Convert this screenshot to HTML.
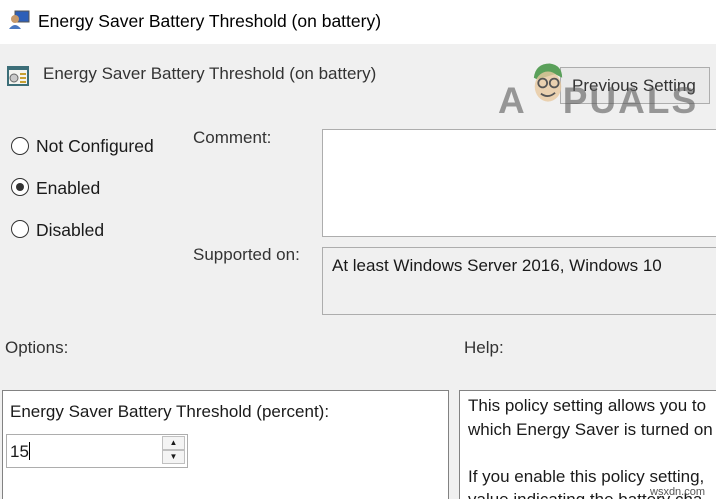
<!DOCTYPE html>
<html style="overflow:hidden;width:716px;height:499px"><head><style>
*{margin:0;padding:0;box-sizing:border-box}
body{width:716px;height:499px;overflow:hidden;background:#f0f0f0;font-family:"Liberation Sans",sans-serif;color:#1a1a1a;position:relative}
.a{position:absolute;white-space:nowrap}
.t{font-size:17px}
.r{position:absolute;width:18px;height:18px;border:1.5px solid #333;border-radius:50%;background:#fff}
</style></head><body>
<div class="a" style="left:0;top:0;width:716px;height:44px;background:#fff"></div>
<svg class="a" style="left:8px;top:9px" width="22" height="22" viewBox="0 0 22 22"><rect x="7" y="2" width="14" height="11" fill="#2d5fb8" stroke="#555"/><circle cx="7" cy="10" r="4" fill="#c89a6a"/><path d="M1 20 Q7 12 13 20Z" fill="#4a78c0"/></svg>
<div class="a" style="left:38px;top:11px;font-size:17.5px;color:#000">Energy Saver Battery Threshold (on battery)</div>
<svg class="a" style="left:6px;top:64px" width="24" height="24" viewBox="0 0 24 24"><rect x="1" y="2" width="22" height="20" fill="#3c6e78"/><rect x="3" y="6" width="18" height="14" fill="#f4f4f0"/><circle cx="8" cy="14" r="4" fill="#c9c9c9" stroke="#666"/><rect x="14" y="9" width="6" height="2" fill="#c8a030"/><rect x="14" y="13" width="6" height="2" fill="#c8a030"/><rect x="14" y="17" width="6" height="2" fill="#c8a030"/></svg>
<div class="a t" style="left:43px;top:64px;color:#333">Energy Saver Battery Threshold (on battery)</div>
<div class="a" style="left:560px;top:67px;width:150px;height:37px;border:1px solid #adadad;background:#e9e9e9"></div>
<div class="a t" style="left:572px;top:76px;color:#333">Previous Setting</div>
<div class="a" style="left:498px;top:80px;font-size:37px;font-weight:bold;color:rgba(90,90,90,.6);letter-spacing:2px">A<span style="display:inline-block;width:36px"></span>PUALS</div>
<svg class="a" style="left:528px;top:60px" width="40" height="46" viewBox="0 0 44 52"><path d="M6 20 Q8 4 24 4 Q38 6 38 20 L30 16 L10 22Z" fill="#5aa05a"/><ellipse cx="22" cy="30" rx="15" ry="17" fill="#e8c9a0" opacity=".8"/><circle cx="16" cy="26" r="5" fill="none" stroke="#555" stroke-width="2"/><circle cx="29" cy="26" r="5" fill="none" stroke="#555" stroke-width="2"/><path d="M14 38 Q22 44 30 37" stroke="#555" stroke-width="2" fill="none"/></svg>
<div class="r" style="left:11px;top:137px"></div>
<div class="r" style="left:11px;top:178px"><div style="position:absolute;left:3.5px;top:3.5px;width:8px;height:8px;border-radius:50%;background:#333"></div></div>
<div class="r" style="left:11px;top:220px"></div>
<div class="a" style="left:36px;top:136px;font-size:17.5px">Not Configured</div>
<div class="a" style="left:36px;top:178px;font-size:17.5px">Enabled</div>
<div class="a" style="left:36px;top:220px;font-size:17.5px">Disabled</div>
<div class="a t" style="left:193px;top:128px;color:#333">Comment:</div>
<div class="a" style="left:322px;top:129px;width:400px;height:108px;background:#fff;border:1px solid #adadad"></div>
<div class="a t" style="left:193px;top:245px;color:#333">Supported on:</div>
<div class="a" style="left:322px;top:247px;width:400px;height:68px;background:#f0f0f0;border:1px solid #adadad"></div>
<div class="a t" style="left:332px;top:256px">At least Windows Server 2016, Windows 10</div>
<div class="a t" style="left:5px;top:338px;color:#333">Options:</div>
<div class="a t" style="left:464px;top:338px;color:#333">Help:</div>
<div class="a" style="left:2px;top:390px;width:447px;height:112px;background:#fff;border:1px solid #828282"></div>
<div class="a t" style="left:10px;top:402px">Energy Saver Battery Threshold (percent):</div>
<div class="a" style="left:6px;top:434px;width:182px;height:34px;background:#fff;border:1px solid #adadad"></div>
<div class="a t" style="left:10px;top:442px">15<span style="display:inline-block;width:1px;height:18px;background:#000;vertical-align:-3px"></span></div>
<div class="a" style="left:162px;top:436px;width:23px;height:14px;border:1px solid #c0c0c0;background:#f4f4f4;font-size:8px;text-align:center;line-height:12px">▲</div>
<div class="a" style="left:162px;top:450px;width:23px;height:14px;border:1px solid #c0c0c0;background:#f4f4f4;font-size:8px;text-align:center;line-height:12px">▼</div>
<div class="a" style="left:459px;top:390px;width:260px;height:112px;background:#fff;border:1px solid #828282"></div>
<div class="a t" style="left:468px;top:394px;line-height:23.5px">This policy setting allows you to<br>which Energy Saver is turned on<br><br>If you enable this policy setting,<br>value indicating the battery cha</div>
<div class="a" style="left:650px;top:486px;font-size:11px;color:#555">wsxdn.com</div>
</body></html>
